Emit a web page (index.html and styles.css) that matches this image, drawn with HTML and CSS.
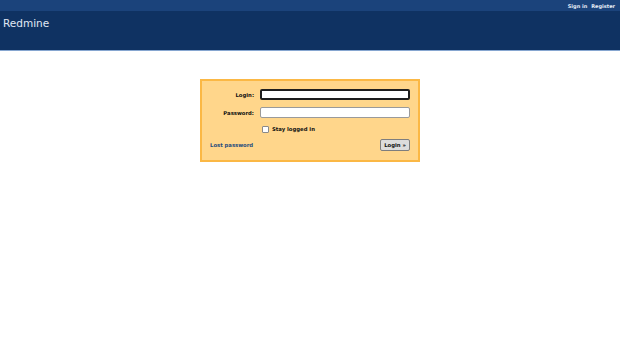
FILE: index.html
```html
<!DOCTYPE html>
<html>
<head>
<meta charset="utf-8">
<title>Redmine</title>
<link rel="stylesheet" href="styles.css">
</head>
<body>
<div class="top-menu">
  <a class="top-link" href="#">Sign in</a>
  <a class="top-link" href="#">Register</a>
</div>
<div class="header">
  <h1 class="site-title">Redmine</h1>
</div>
<div class="main">
  <form class="login-box">
    <div class="grid">
      <label class="label">Login:</label>
      <input class="field focused" type="text">
      <label class="label">Password:</label>
      <input class="field" type="password">
      <span></span>
      <label class="remember"><span class="check"></span>Stay logged in</label>
    </div>
    <div class="actions">
      <a class="lost" href="#">Lost password</a>
      <button class="btn" type="button">Login »</button>
    </div>
  </form>
</div>
</body>
</html>
```
FILE: styles.css
```css
html, body {
  margin: 0;
  padding: 0;
  background: #ffffff;
  font-family: "DejaVu Sans", Verdana, sans-serif;
}
.top-menu {
  height: 11px;
  background: #1b437b;
  display: flex;
  justify-content: flex-end;
  align-items: center;
  gap: 4px;
  padding-right: 5px;
}
.top-link {
  color: #e4ecf6;
  font-size: 5px;
  font-weight: bold;
  text-decoration: none;
}
.header {
  height: 40px;
  background: #0f3262;
  border-bottom: 1px solid #86a6d0;
  box-sizing: border-box;
}
.site-title {
  margin: 0;
  padding: 6px 0 0 3px;
  font-size: 10.5px;
  line-height: 13px;
  font-weight: normal;
  color: #e0e8f4;
  font-family: "DejaVu Sans", sans-serif;
}
.main {
  padding-top: 28px;
  padding-left: 200px;
}
.login-box {
  width: 220px;
  height: 83px;
  box-sizing: border-box;
  background: #ffd68b;
  border: 2px solid #fbb845;
  margin: 0;
  padding-top: 8px;
}
.grid {
  display: grid;
  grid-template-columns: 52px 150px;
  column-gap: 6px;
  row-gap: 7px;
  grid-template-rows: 11px 11px 8px;
  align-items: center;
}
.label {
  text-align: right;
  font-size: 5.3px;
  font-weight: bold;
  color: #111;
}
.field {
  box-sizing: border-box;
  width: 150px;
  height: 11px;
  margin: 0;
  padding: 0;
  border: 1px solid #9a9a9a;
  border-radius: 2px;
  background: #ffffff;
}
.field.focused {
  border: 2px solid #1e1e1e;
}
.remember {
  display: flex;
  align-items: center;
  gap: 3px;
  padding-left: 2px;
  font-size: 5.3px;
  font-weight: bold;
  color: #111;
}
.check {
  width: 7px;
  height: 7px;
  box-sizing: border-box;
  border: 1px solid #8a8a8a;
  border-radius: 1px;
  background: #ffffff;
}
.actions {
  display: flex;
  justify-content: space-between;
  align-items: center;
  margin-top: 6px;
  padding: 0 8px 0 8px;
}
.lost {
  font-size: 5.3px;
  font-weight: bold;
  color: #1f4c7e;
  text-decoration: none;
}
.btn {
  height: 12px;
  width: 30px;
  padding: 0;
  margin: 0;
  font-family: "DejaVu Sans", sans-serif;
  font-size: 5.3px;
  font-weight: bold;
  color: #111;
  background: #dcdcdc;
  border: 1px solid #7e7e7e;
  border-radius: 2px;
}
```
